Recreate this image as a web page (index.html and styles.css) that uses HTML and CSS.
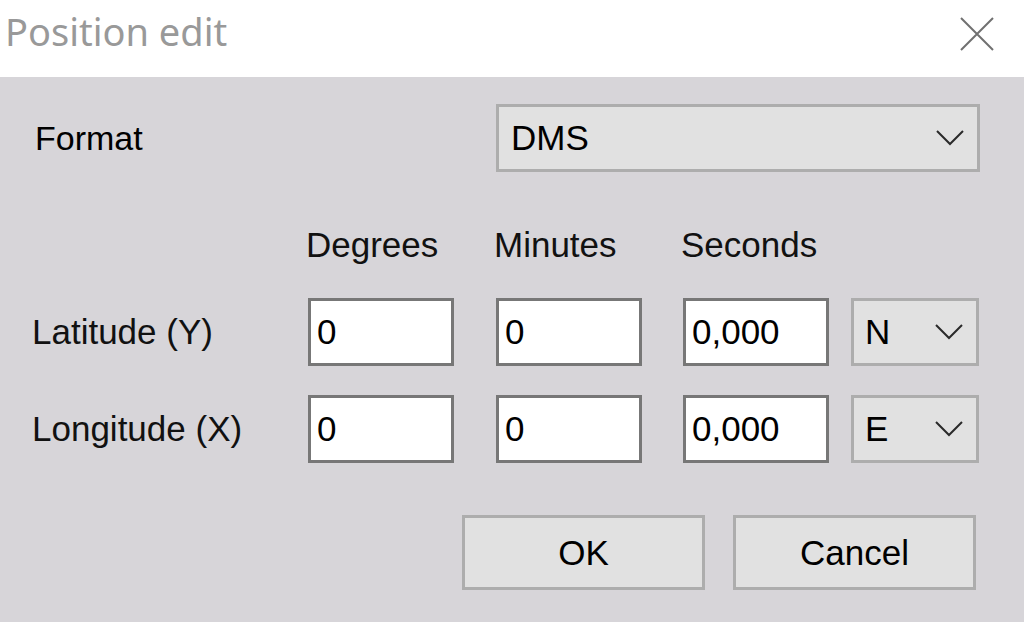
FILE: index.html
```html
<!DOCTYPE html>
<html lang="en">
<head>
	<meta charset="UTF-8">
	<title>Position edit</title>
	<link rel="stylesheet" href="styles.css">
</head>
<body>
	<div id="dialog">
		<div id="titlebar">
			<span id="title">Position edit</span>
			<span id="close">
				<svg width="34" height="34" viewBox="0 0 34 34">
					<path d="M1 1 L33 33 M33 1 L1 33" stroke="#707070" stroke-width="2" fill="none"/>
				</svg>
			</span>
		</div>

		<div id="content">
			<div class="row format_row">
				<span class="label fmt">Format</span>
				<div class="combo wide">
					<span>DMS</span>
					<svg class="chev" width="28" height="16" viewBox="0 0 28 16"><polyline points="1,1 14,14 27,1" stroke="#2a2a2a" stroke-width="2" fill="none"/></svg>
				</div>
			</div>

			<div class="row head_row">
				<span></span>
				<span class="head">Degrees</span>
				<span class="head">Minutes</span>
				<span class="head">Seconds</span>
			</div>

			<div class="row field_row">
				<span class="label">Latitude (Y)</span>
				<input type="text" value="0">
				<input type="text" value="0">
				<input type="text" value="0,000">
				<div class="combo">
					<span>N</span>
					<svg class="chev" width="28" height="16" viewBox="0 0 28 16"><polyline points="1,1 14,14 27,1" stroke="#2a2a2a" stroke-width="2" fill="none"/></svg>
				</div>
			</div>

			<div class="row field_row second">
				<span class="label">Longitude (X)</span>
				<input type="text" value="0">
				<input type="text" value="0">
				<input type="text" value="0,000">
				<div class="combo">
					<span>E</span>
					<svg class="chev" width="28" height="16" viewBox="0 0 28 16"><polyline points="1,1 14,14 27,1" stroke="#2a2a2a" stroke-width="2" fill="none"/></svg>
				</div>
			</div>

			<div id="buttons">
				<button>OK</button>
				<button>Cancel</button>
			</div>
		</div>
	</div>
</body>
</html>
```

FILE: styles.css
```css
* {
	margin: 0;
	padding: 0;
	box-sizing: border-box;
}
body {
	width: 1024px;
	height: 622px;
	overflow: hidden;
	background: #d7d5d9;
	font-family: "Liberation Sans", Arial, sans-serif;
	font-size: 35px;
	color: #000;
}
#dialog {
	height: 622px;
	display: flex;
	flex-direction: column;
}
#titlebar {
	height: 77px;
	background: #fff;
	display: flex;
	justify-content: space-between;
	align-items: flex-start;
}
#title {
	padding: 5px 0 0 5px;
	font-family: "Noto Sans", "Open Sans", sans-serif;
	font-size: 38px;
	line-height: 52px;
	color: #999;
}
#close {
	margin: 17px 30px 0 0;
	height: 34px;
}
#close svg {
	display: block;
}
#content {
	flex: 1;
	padding: 27px 0 0 32px;
}
.row {
	display: grid;
	grid-template-columns: 276px 188px 187px 168px 128px;
	align-items: center;
}
.label {
	line-height: 40px;
	color: #111;
}
.fmt {
	padding-left: 3px;
	font-size: 34px;
	color: #000;
}
.head_row {
	margin-top: 53px;
	line-height: 40px;
}
.head {
	margin-left: -2px;
	color: #111;
}
.field_row {
	margin-top: 33px;
}
.field_row.second {
	margin-top: 29px;
}
input {
	width: 146px;
	height: 68px;
	border: 3px solid #777;
	background: #fff;
	padding: 0 0 0 6px;
	font-family: "Liberation Sans", Arial, sans-serif;
	font-size: 35px;
	color: #000;
	outline: none;
}
.combo {
	height: 68px;
	border: 3px solid #adadad;
	background: #e1e1e1;
	display: flex;
	align-items: center;
	justify-content: space-between;
	padding: 0 13px 0 11px;
}
.combo.wide {
	grid-column: 3 / 6;
	width: 484px;
	padding-left: 12px;
}
.chev {
	display: block;
}
#buttons {
	margin-top: 52px;
	padding-right: 48px;
	display: flex;
	justify-content: flex-end;
	gap: 28px;
}
button {
	width: 243px;
	height: 75px;
	border: 3px solid #adadad;
	background: #e1e1e1;
	font-family: "Liberation Sans", Arial, sans-serif;
	font-size: 35px;
	color: #000;
}
```
